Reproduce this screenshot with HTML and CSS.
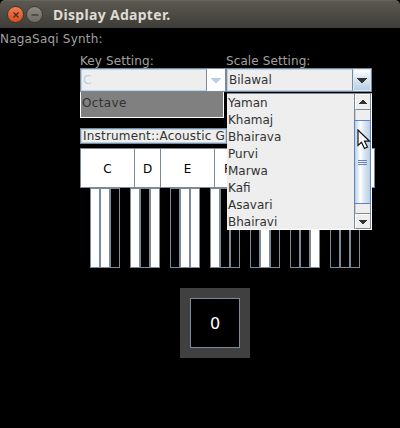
FILE: index.html
```html
<!DOCTYPE html>
<html lang="en">
<head>
<meta charset="utf-8">
<title>Display Adapter.</title>
<link rel="stylesheet" href="styles.css">
</head>
<body>
<header class="titlebar">
  <span class="winbtn close"><svg width="16" height="16" viewBox="0 0 16 16"><path d="M5.5 5.5l5 5M10.5 5.5l-5 5"/></svg></span>
  <span class="winbtn"><svg width="16" height="16" viewBox="0 0 16 16"><path d="M4.5 8h7"/></svg></span>
  <h1>Display Adapter.</h1>
</header>
<main>
  <div class="name"><span>NagaSaqi Synth:</span></div>
  <section class="panel">
    <div class="labels"><span>Key Setting:</span><span class="scale-label">Scale Setting:</span></div>
    <div class="combos">
      <div class="combo disabled"><span class="value">C</span><span class="arrow"><svg width="10" height="5" viewBox="0 0 10 5"><path d="M0 0h10v1H9v1H8v1H7v1H6v1H4V4H3V3H2V2H1V1H0z"/></svg></span></div>
      <div class="combo"><span class="value">Bilawal</span><span class="arrow"><svg width="10" height="5" viewBox="0 0 10 5"><path d="M0 0h10v1H9v1H8v1H7v1H6v1H4V4H3V3H2V2H1V1H0z"/></svg></span>
        <div class="popup">
          <ul>
            <li>Yaman</li><li>Khamaj</li><li>Bhairava</li><li>Purvi</li><li>Marwa</li><li>Kafi</li><li>Asavari</li><li>Bhairavi</li>
          </ul>
          <div class="scroll">
            <span class="step"><svg width="8" height="4" viewBox="0 0 8 4"><path d="M3 0h2v1h1v1h1v1h1v1H0V3h1V2h1V1h1z"/></svg></span>
            <span class="track"></span>
            <span class="thumb"><i></i><i></i><i></i></span>
            <span class="track low"></span>
            <span class="step down"><svg width="8" height="4" viewBox="0 0 8 4"><path d="M0 0h8v1H7v1H6v1H5v1H3V3H2V2H1V1H0z"/></svg></span>
          </div>
          <svg class="cursor" width="14" height="21" viewBox="0 0 14 21"><path d="M1 1v15.5l3.5-3.2 3 6.2 3-1.5-3-5.8h5z"/></svg>
        </div>
      </div>
    </div>
    <div class="octave"><span>Octave</span></div>
    <div class="instrument"><span>Instrument::Acoustic G</span></div>
    <div class="notes"><span class="c">C</span><span class="d">D</span><span class="e">E</span><span class="f">F</span></div>
    <div class="keys">
      <div><b class="on"></b><b class="on"></b><b></b></div>
      <div><b class="on"></b><b></b><b class="on"></b></div>
      <div><b></b><b class="on"></b><b class="on"></b></div>
      <div><b class="on"></b><b></b><b></b></div>
      <div><b></b><b class="on"></b><b></b></div>
      <div><b></b><b></b><b class="on"></b></div>
      <div><b></b><b></b><b></b></div>
    </div>
    <div class="counter"><span>0</span></div>
  </section>
</main>
</body>
</html>
```
FILE: styles.css
```css
* { box-sizing: border-box; }
body {
  margin: 0;
  width: 400px;
  height: 428px;
  overflow: hidden;
  background: #000;
  color: #333;
  font: 12px/16px "DejaVu Sans", sans-serif;
  white-space: nowrap;
}
svg { display: block; }
.titlebar {
  display: flex;
  align-items: center;
  height: 28px;
  padding: 0 0 0 7px;
  background: linear-gradient(#5b5950, #3d3c38);
  border-top: 1px solid #66645b;
  border-radius: 5px 5px 0 0;
}
.winbtn {
  width: 17px;
  height: 17px;
  margin-right: 2px;
  border: 1px solid #3a3934;
  border-radius: 50%;
  background: linear-gradient(#8b8981, #6c6a63);
}
.winbtn svg { margin: -0.5px; }
.winbtn path { fill: none; stroke: #33322e; stroke-width: 1.2; }
.winbtn.close { background: linear-gradient(#f37b54, #df4c1b); }
h1 {
  margin: 0 0 0 8px;
  font: bold 14px/20px "Noto Sans", sans-serif;
  letter-spacing: .3px;
  color: #dfdbd2;
}
.name { height: 24px; padding-top: 3px; color: #a0a0a0; letter-spacing: .2px; }
.panel { width: 295px; margin-left: 80px; }
.labels { display: grid; grid-template-columns: 146px 149px; height: 16px; color: #a0a0a0; line-height: 19px; letter-spacing: .1px; }
.combos { display: flex; height: 24px; }
.combo {
  position: relative;
  display: flex;
  width: 146px;
  border: 1px solid #7a8a99;
  background: #eee;
}
.value { width: 126px; padding-left: 1px; border: 1px solid #b8cfe5; border-right-color: #7a8a99; line-height: 20px; }
.arrow {
  display: flex;
  flex: 1;
  align-items: center;
  justify-content: center;
  background: linear-gradient(#fff, #dce8f3 40%, #b8cfe5);
  border: 1px solid #dce8f4;
  fill: #333;
}
.arrow svg { flex: none; }
.disabled .value { color: #b8cfe5; }
.disabled .arrow { background: #fff; border-color: #fff; fill: #b8cfe5; }
.popup {
  position: absolute;
  z-index: 1;
  left: 0;
  top: 24px;
  display: flex;
  width: 145px;
  height: 137px;
  background: #eee;
  border: solid #7a8a99;
  border-width: 1px 0 0;
  border-right: 1px solid #fff;
  border-bottom: 1px solid #fff;
}
ul { flex: 1; margin: 0; padding: 1px 0 0 1px; list-style: none; line-height: 17px; }
li { height: 17px; }
.scroll { display: flex; flex-direction: column; width: 17px; border-left: 1px solid #7a8a99; border-right: 1px solid #7a8a99; }
.step { display: flex; align-items: center; justify-content: center; height: 15px; background: #eee; border: solid #fff; border-width: 1px 0 0 1px; fill: #333; }
.step.down { border-bottom: 1px solid #7a8a99; }
.track { height: 11px; border-top: 1px solid #7a8a99; border-left: 1px solid #ccc; }
.track.low { height: 10px; border-top: 0; border-bottom: 1px solid #7a8a99; }
.thumb {
  display: flex;
  flex-direction: column;
  flex: 1;
  justify-content: center;
  gap: 1px;
  align-items: center;
  margin: 0 -1px;
  border: 1px solid #6382bf;
  background: linear-gradient(90deg, #b8cfe5, #fff 35%, #dce8f3 60%, #b8cfe5);
}
.thumb i { width: 9px; height: 1px; background: #6382bf; }
.cursor { position: absolute; left: 130px; top: 35px; fill: #fff; stroke: #111; stroke-width: 1.2; }
.octave { width: 144px; height: 26px; padding-left: 1px; background: #808080; border: 1px solid #fff; border-top: 0; line-height: 22px; letter-spacing: .35px; }
.instrument { width: 147px; height: 16px; margin-top: 10px; padding-left: 2px; overflow: hidden; background: #eee; border: 1px solid #7a8a99; box-shadow: inset 0 0 0 1px #b8cfe5; line-height: 14px; letter-spacing: .2px; }
.notes { display: flex; height: 40px; margin-top: 4px; background: #fff; border: 1px solid #7a8a99; color: #000; line-height: 40px; text-align: center; }
.notes span { border-right: 1px solid #7a8a99; }
.notes .c { width: 54px; }
.notes .d { width: 26px; }
.notes .e { width: 54px; }
.notes .f { width: 26px; }
.keys { display: flex; gap: 10px; height: 80px; padding-left: 10px; }
.keys div { display: flex; }
.keys b { width: 10px; border: 1px solid #7a8a99; background: #000; }
.keys .on { background: #fff; }
.counter { width: 70px; height: 70px; margin: 20px 0 0 100px; padding: 10px; background: #404040; }
.counter span { display: block; height: 50px; border: 1px solid #7a8a99; background: #000; color: #fff; font-size: 16px; line-height: 49px; text-align: center; }
```
